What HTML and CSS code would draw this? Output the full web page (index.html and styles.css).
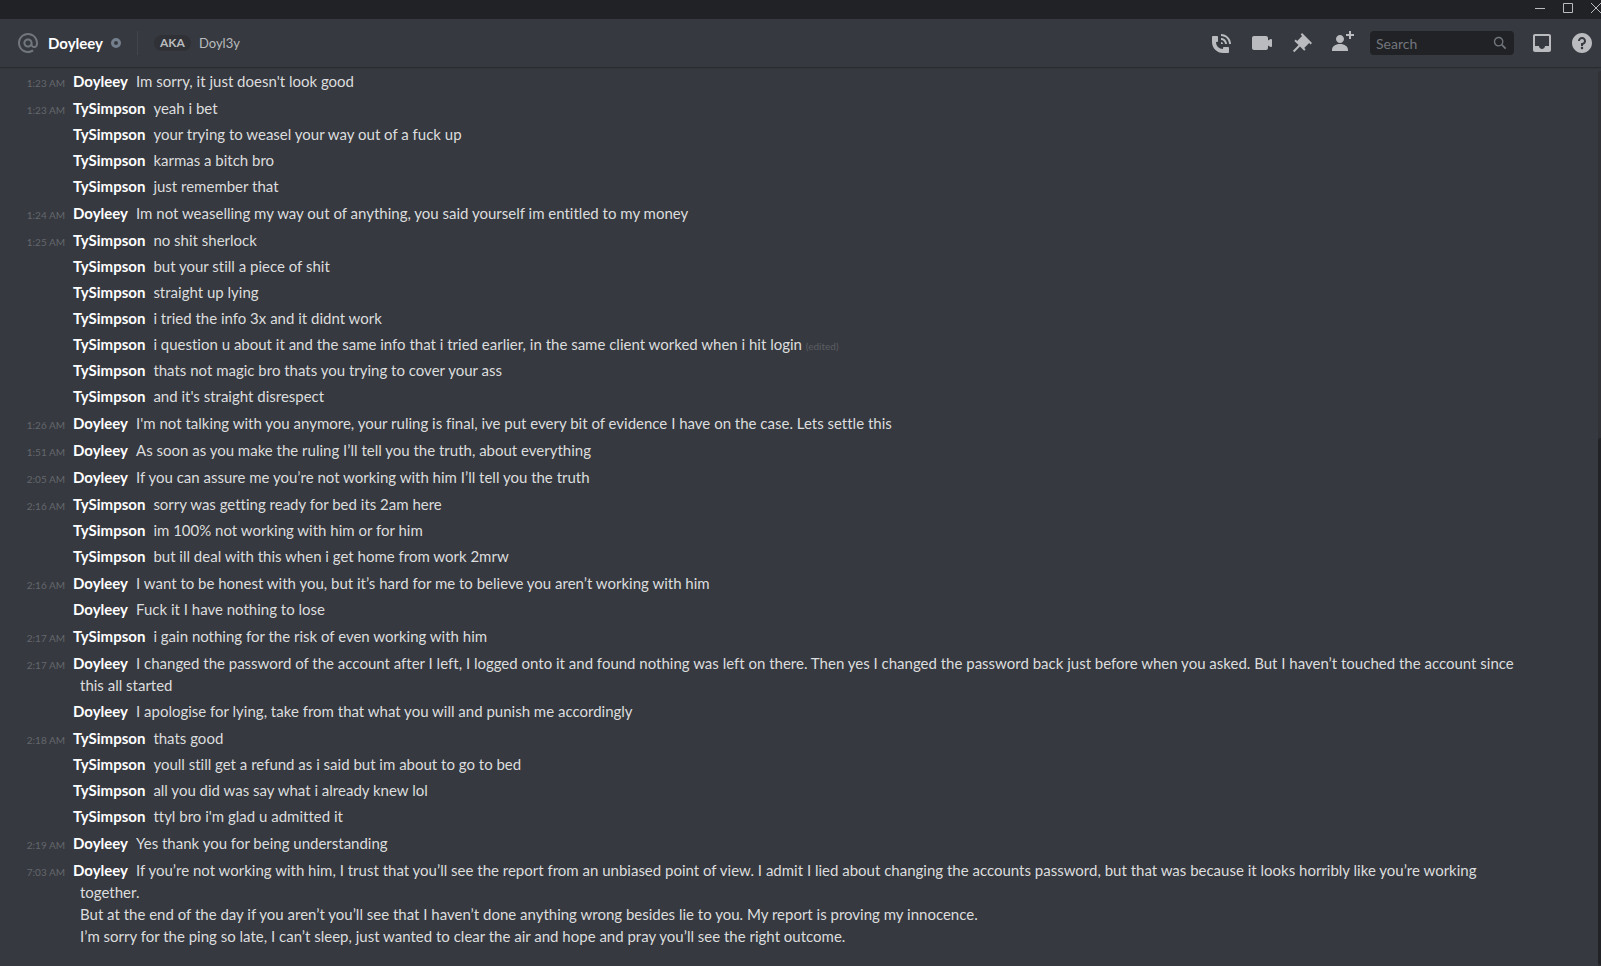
FILE: index.html
```html
<!DOCTYPE html>
<html lang="en">
<head>
  <meta charset="utf-8">
  <meta name="viewport" content="width=device-width, initial-scale=1">
  <title>@Doyleey</title>
  <link rel="stylesheet" href="styles.css">
</head>
<body>
  <div class="titlebar">
    <button class="win-btn" aria-label="Minimize"><svg viewBox="0 0 10 10"><path d="M0 5.5h10"/></svg></button>
    <button class="win-btn" aria-label="Maximize"><svg viewBox="0 0 10 10"><path d="M.5.5h9v9h-9z"/></svg></button>
    <button class="win-btn" aria-label="Close"><svg viewBox="0 0 10 10"><path d="M0 0l10 10M10 0L0 10"/></svg></button>
  </div>

  <header class="header">
    <svg class="at" viewBox="0 0 24 24"><path d="M12 2C6.486 2 2 6.486 2 12C2 17.515 6.486 22 12 22C14.039 22 15.993 21.398 17.652 20.259L16.521 18.611C15.195 19.519 13.633 20 12 20C7.589 20 4 16.411 4 12C4 7.589 7.589 4 12 4C16.411 4 20 7.589 20 12V12.782C20 14.17 19.402 15 18.4 15H18C17.437 15 16.6 14.182 16.6 13.631V12C16.6 9.464 14.537 7.4 12 7.4C9.463 7.4 7.4 9.463 7.4 12C7.4 14.537 9.463 16.6 12 16.6C13.234 16.6 14.35 16.106 15.177 15.313C15.826 16.269 16.93 17 18 17H18.4C20.552 17 22 15.306 22 12.782V12C22 6.486 17.514 2 12 2ZM12 14.599C10.566 14.599 9.4 13.433 9.4 11.999C9.4 10.565 10.566 9.399 12 9.399C13.434 9.399 14.6 10.565 14.6 11.999C14.6 13.433 13.434 14.599 12 14.599Z"/></svg>
    <h1 class="title">Doyleey</h1>
    <span class="status"></span>
    <span class="divider"></span>
    <span class="aka">AKA</span>
    <span class="nick">Doyl3y</span>

    <div class="toolbar">
      <button class="icon-btn" aria-label="Start Voice Call"><svg viewBox="0 0 24 24"><path d="M11 5V3C16.515 3 21 7.486 21 13H19C19 8.589 15.411 5 11 5ZM17 13H15C15 10.795 13.206 9 11 9V7C14.309 7 17 9.691 17 13ZM11 11V13H13C13 11.896 12.105 11 11 11ZM14 16H18C18.553 16 19 16.447 19 17V21C19 21.553 18.553 22 18 22H13C6.925 22 2 17.075 2 11V6C2 5.447 2.448 5 3 5H7C7.553 5 8 5.447 8 6V10C8 10.553 7.553 11 7 11H6C6.063 14.938 9 18 13 18V17C13 16.447 13.447 16 14 16Z"/></svg></button>
      <button class="icon-btn" aria-label="Start Video Call"><svg viewBox="0 0 24 24"><path d="M21.526 8.149C21.231 7.966 20.862 7.951 20.553 8.105L18 9.382V7C18 5.897 17.103 5 16 5H4C2.897 5 2 5.897 2 7V17C2 18.104 2.897 19 4 19H16C17.103 19 18 18.104 18 17V14.618L20.553 15.894C21.2 16.2 22 15.7 22 15V9C22 8.653 21.82 8.332 21.526 8.149Z"/></svg></button>
      <button class="icon-btn" aria-label="Pinned Messages"><svg viewBox="0 0 24 24"><path d="M22 12L12.101 2.101L10.686 3.514L12.101 4.929L7.151 9.879L5.736 8.465L4.322 9.88L8.565 14.122L2.908 19.778L4.322 21.192L9.979 15.536L14.222 19.778L15.636 18.364L14.222 16.95L19.171 12L20.586 13.414L22 12Z"/></svg></button>
      <button class="icon-btn" aria-label="Add Friends to DM"><svg viewBox="0 0 24 24"><path d="M21 3H24V5H21V8H19V5H16V3H19V0H21V3ZM10 12C12.205 12 14 10.205 14 8C14 5.795 12.205 4 10 4C7.795 4 6 5.795 6 8C6 10.205 7.795 12 10 12ZM10 13C5.289 13 2 15.467 2 19V20H18V19C18 15.467 14.711 13 10 13Z"/></svg></button>
      <div class="search">
        <input class="search-input" type="text" placeholder="Search" aria-label="Search">
        <svg viewBox="0 0 18 18"><path d="M3.6 7.5c0-2.16 1.75-3.9 3.9-3.9s3.9 1.74 3.9 3.9-1.75 3.9-3.9 3.9-3.9-1.75-3.9-3.9zm8.3 3c.6-.87.96-1.91.96-3.04C12.86 4.5 10.45 2.1 7.5 2.1S2.1 4.5 2.1 7.5s2.4 5.4 5.4 5.4c1.13 0 2.18-.36 3.04-.96l4.1 4.1 1.4-1.4z"/></svg>
      </div>
      <button class="icon-btn" aria-label="Inbox"><svg viewBox="0 0 24 24"><path d="M19 3H4.99C3.88 3 3.01 3.89 3.01 5L3 19C3 20.1 3.88 21 4.99 21H19C20.1 21 21 20.1 21 19V5C21 3.89 20.1 3 19 3ZM19 15H15C15 16.66 13.65 18 12 18C10.35 18 9 16.66 9 15H4.99V5H19V15Z"/></svg></button>
      <button class="icon-btn" aria-label="Help"><svg viewBox="0 0 24 24"><path d="M12 2C6.486 2 2 6.487 2 12C2 17.515 6.486 22 12 22C17.514 22 22 17.515 22 12C22 6.487 17.514 2 12 2ZM12 18.25C11.31 18.25 10.75 17.691 10.75 17C10.75 16.31 11.31 15.75 12 15.75C12.69 15.75 13.25 16.31 13.25 17C13.25 17.691 12.69 18.25 12 18.25ZM13 13.875V15H11V12H12C13.104 12 14 11.103 14 10C14 8.896 13.104 8 12 8C10.896 8 10 8.896 10 10H8C8 7.795 9.795 6 12 6C14.205 6 16 7.795 16 10C16 11.861 14.723 13.429 13 13.875Z"/></svg></button>
    </div>
  </header>

  <main class="chat">
    <div class="messages">
      <div class="group">
        <div class="message"><time>1:23 AM</time><p><b>Doyleey</b>Im sorry, it just doesn't look good</p></div>
      </div>
      <div class="group">
        <div class="message"><time>1:23 AM</time><p><b>TySimpson</b>yeah i bet</p></div>
        <div class="message"><p><b>TySimpson</b>your trying to weasel your way out of a fuck up</p></div>
        <div class="message"><p><b>TySimpson</b>karmas a bitch bro</p></div>
        <div class="message"><p><b>TySimpson</b>just remember that</p></div>
      </div>
      <div class="group">
        <div class="message"><time>1:24 AM</time><p><b>Doyleey</b>Im not weaselling my way out of anything, you said yourself im entitled to my money</p></div>
      </div>
      <div class="group">
        <div class="message"><time>1:25 AM</time><p><b>TySimpson</b>no shit sherlock</p></div>
        <div class="message"><p><b>TySimpson</b>but your still a piece of shit</p></div>
        <div class="message"><p><b>TySimpson</b>straight up lying</p></div>
        <div class="message"><p><b>TySimpson</b>i tried the info 3x and it didnt work</p></div>
        <div class="message"><p><b>TySimpson</b>i question u about it and the same info that i tried earlier, in the same client worked when i hit login <small>(edited)</small></p></div>
        <div class="message"><p><b>TySimpson</b>thats not magic bro thats you trying to cover your ass</p></div>
        <div class="message"><p><b>TySimpson</b>and it's straight disrespect</p></div>
      </div>
      <div class="group">
        <div class="message"><time>1:26 AM</time><p><b>Doyleey</b>I'm not talking with you anymore, your ruling is final, ive put every bit of evidence I have on the case. Lets settle this</p></div>
      </div>
      <div class="group">
        <div class="message"><time>1:51 AM</time><p><b>Doyleey</b>As soon as you make the ruling I’ll tell you the truth, about everything</p></div>
      </div>
      <div class="group">
        <div class="message"><time>2:05 AM</time><p><b>Doyleey</b>If you can assure me you’re not working with him I’ll tell you the truth</p></div>
      </div>
      <div class="group">
        <div class="message"><time>2:16 AM</time><p><b>TySimpson</b>sorry was getting ready for bed its 2am here</p></div>
        <div class="message"><p><b>TySimpson</b>im 100% not working with him or for him</p></div>
        <div class="message"><p><b>TySimpson</b>but ill deal with this when i get home from work 2mrw</p></div>
      </div>
      <div class="group">
        <div class="message"><time>2:16 AM</time><p><b>Doyleey</b>I want to be honest with you, but it’s hard for me to believe you aren’t working with him</p></div>
        <div class="message"><p><b>Doyleey</b>Fuck it I have nothing to lose</p></div>
      </div>
      <div class="group">
        <div class="message"><time>2:17 AM</time><p><b>TySimpson</b>i gain nothing for the risk of even working with him</p></div>
      </div>
      <div class="group">
        <div class="message"><time>2:17 AM</time><p><b>Doyleey</b>I changed the password of the account after I left, I logged onto it and found nothing was left on there. Then yes I changed the password back just before when you asked. But I haven’t touched the account since this all started</p></div>
        <div class="message"><p><b>Doyleey</b>I apologise for lying, take from that what you will and punish me accordingly</p></div>
      </div>
      <div class="group">
        <div class="message"><time>2:18 AM</time><p><b>TySimpson</b>thats good</p></div>
        <div class="message"><p><b>TySimpson</b>youll still get a refund as i said but im about to go to bed</p></div>
        <div class="message"><p><b>TySimpson</b>all you did was say what i already knew lol</p></div>
        <div class="message"><p><b>TySimpson</b>ttyl bro i'm glad u admitted it</p></div>
      </div>
      <div class="group">
        <div class="message"><time>2:19 AM</time><p><b>Doyleey</b>Yes thank you for being understanding</p></div>
      </div>
      <div class="group">
        <div class="message"><time>7:03 AM</time><p><b>Doyleey</b>If you’re not working with him, I trust that you’ll see the report from an unbiased point of view. I admit I lied about changing the accounts password, but that was because it looks horribly like you’re working together.<br>But at the end of the day if you aren’t you’ll see that I haven’t done anything wrong besides lie to you. My report is proving my innocence.<br>I’m sorry for the ping so late, I can’t sleep, just wanted to clear the air and hope and pray you’ll see the right outcome.</p></div>
      </div>
    </div>
    <div class="scrollbar"><div class="thumb"></div></div>
  </main>
</body>
</html>
```
FILE: styles.css
```css
* {
  box-sizing: border-box;
}

body {
  margin: 0;
  height: 100vh;
  display: flex;
  flex-direction: column;
  overflow: hidden;
  background: #36393f;
  color: #dcddde;
  font-family: Lato, "Open Sans", sans-serif;
  font-size: 15px;
  font-variant-ligatures: none;
  line-height: 22px;
}

button {
  padding: 0;
  border: none;
  background: none;
  cursor: pointer;
}

svg {
  display: block;
}

/* window bar */
.titlebar {
  flex: none;
  height: 19px;
  padding-top: 3px;
  display: flex;
  justify-content: flex-end;
  gap: 18px;
  background: #202225;
}

.win-btn {
  width: 10px;
  height: 10px;
}

.win-btn svg {
  width: 10px;
  height: 10px;
  fill: none;
  stroke: #b9bbbe;
}

/* channel header */
.header {
  flex: none;
  height: 48px;
  padding: 0 7px 0 16px;
  display: flex;
  align-items: center;
  box-shadow: 0 1px 0 rgba(4, 4, 5, 0.2), 0 2px 0 rgba(6, 6, 7, 0.05);
}

.at {
  width: 24px;
  height: 24px;
  margin-right: 8px;
  fill: #72767d;
}

.title {
  margin: 0;
  font-size: 15px;
  font-weight: bold;
  color: #fff;
}

.status {
  width: 10px;
  height: 10px;
  margin-left: 8px;
  border: 3px solid #747f8d;
  border-radius: 50%;
}

.divider {
  width: 1px;
  height: 24px;
  margin: 0 16px;
  background: #42454b;
}

.aka {
  padding: 0 6px;
  border-radius: 8px;
  background: #2f3136;
  color: #b9bbbe;
  font-size: 12px;
  font-weight: bold;
  line-height: 16px;
}

.nick {
  margin-left: 8px;
  color: #b9bbbe;
  font-size: 13px;
}

.toolbar {
  margin-left: auto;
  display: flex;
  align-items: center;
  gap: 16px;
}

.icon-btn svg {
  width: 24px;
  height: 24px;
  fill: #b9bbbe;
}

.search {
  width: 144px;
  height: 24px;
  padding: 0 6px;
  display: flex;
  align-items: center;
  border-radius: 4px;
  background: #202225;
}

.search-input {
  flex: 1;
  min-width: 0;
  padding: 0;
  border: none;
  outline: none;
  background: none;
  color: #dcddde;
  font-family: inherit;
  font-size: 14px;
}

.search-input::placeholder {
  color: #72767d;
}

.search svg {
  width: 16px;
  height: 16px;
  fill: #72767d;
}

/* messages, compact mode */
.chat {
  flex: 1;
  min-height: 0;
  display: flex;
}

.messages {
  flex: 1;
  min-width: 0;
  overflow: hidden;
}

.group {
  margin-top: 1px;
}

.message {
  padding: 2px 68px 2px 0;
  display: grid;
  grid-template-columns: 65px 1fr;
  column-gap: 8px;
  align-items: baseline;
}

.message time {
  color: #64676d;
  font-size: 10px;
  line-height: 12px;
  text-align: right;
}

.message p {
  grid-column: 2;
  margin: 0;
  padding-left: 7px;
  text-indent: -7px;
}

.message b {
  margin-right: 8px;
  color: #fff;
}

.message small {
  color: #5b5e64;
  font-size: 10px;
  line-height: 12px;
}

.scrollbar {
  flex: none;
  width: 3px;
  margin-top: 4px;
  padding-bottom: 1px;
  display: flex;
  flex-direction: column;
  justify-content: flex-end;
  background: #2f3136;
  border-top-left-radius: 3px;
}

.thumb {
  height: 59%;
  background: #202225;
  border-radius: 3px 0 0 3px;
}
```
